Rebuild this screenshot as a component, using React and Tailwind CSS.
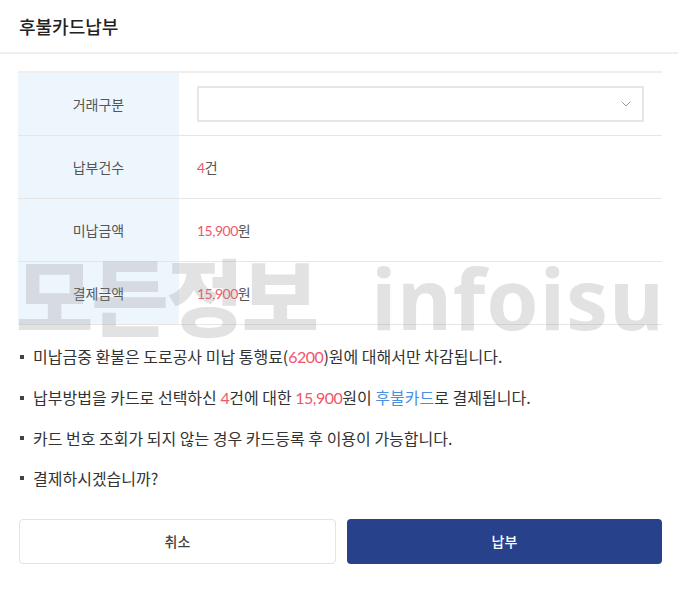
import { ChevronDown } from "lucide-react";

const KR = { fontFamily: '"Noto Sans CJK KR", "Noto Sans", sans-serif' };
const NUM = "font-['Lato','Noto_Sans_CJK_KR',sans-serif]";

function Row({ label, children }) {
  return (
    <div className="flex h-[63px] border-b border-[#e6e6e6]">
      <div className="flex w-[161px] items-center justify-center bg-[#eef6fd] text-[14px] text-[#555]">{label}</div>
      <div className="flex flex-1 items-center pl-[18px] pr-[18px] text-[14px] text-[#555]">{children}</div>
    </div>
  );
}

function Bullet({ children }) {
  return (
    <li className="flex items-center gap-[9px] text-[16px] leading-6 text-[#333]">
      <span className="ml-[2px] h-[4px] w-[4px] shrink-0 bg-[#444]" />
      <span>{children}</span>
    </li>
  );
}

const Red = ({ children }) => <span className={`text-[#f2566b] tracking-[-0.5px] ${NUM}`}>{children}</span>;

export default function App() {
  return (
    <div className="relative h-[612px] w-[678px] overflow-hidden bg-white" style={KR}>
      <header className="flex h-[54px] items-center border-b-2 border-[#eeeeee] pl-[19px]">
        <h1 className="text-[18px] font-medium text-[#222]">후불카드납부</h1>
      </header>

      <div className="px-[18px] pt-[17px] pr-[16px]">
        <div className="border-t-2 border-[#eeeeee]">
          <Row label="거래구분">
            <div className="flex h-[36px] w-full items-center justify-end border-2 border-[#e6e6e6] pr-[8px]">
              <ChevronDown size={16} strokeWidth={1.25} className="text-[#888]" />
            </div>
          </Row>
          <Row label="납부건수">
            <span><Red>4</Red>건</span>
          </Row>
          <Row label="미납금액">
            <span><Red>15,900</Red>원</span>
          </Row>
          <Row label="결제금액">
            <span><Red>15,900</Red>원</span>
          </Row>
        </div>

        <ul className="mt-[19px] flex flex-col gap-[16px]">
          <Bullet>미납금중 환불은 도로공사 미납 통행료(<Red>6200</Red>)원에 대해서만 차감됩니다.</Bullet>
          <Bullet>
            납부방법을 카드로 선택하신 <Red>4</Red>건에 대한 <Red>15,900</Red>원이{" "}
            <span className="text-[#4a8fe0]">후불카드</span>로 결제됩니다.
          </Bullet>
          <Bullet>카드 번호 조회가 되지 않는 경우 카드등록 후 이용이 가능합니다.</Bullet>
          <Bullet>결제하시겠습니까?</Bullet>
        </ul>

        <div className="mt-[29px] flex gap-[11px] pl-px">
          <button className="h-[45px] flex-1 rounded-[4px] border border-[#e3e3e3] bg-white text-[14px] font-medium text-[#444]">취소</button>
          <button className="h-[45px] flex-1 rounded-[4px] bg-[#27418a] text-[14px] font-medium text-white">납부</button>
        </div>
      </div>

      <div className="pointer-events-none absolute left-[16px] top-[252px] flex items-baseline whitespace-nowrap leading-none text-[rgba(150,150,150,0.28)]">
        <span className="text-[84px] font-black tracking-[-2px]">모든정보</span>
        <span className="ml-[54px] font-['Noto_Sans',sans-serif] text-[84px] font-bold tracking-[1px]">infoisu</span>
      </div>
    </div>
  );
}
